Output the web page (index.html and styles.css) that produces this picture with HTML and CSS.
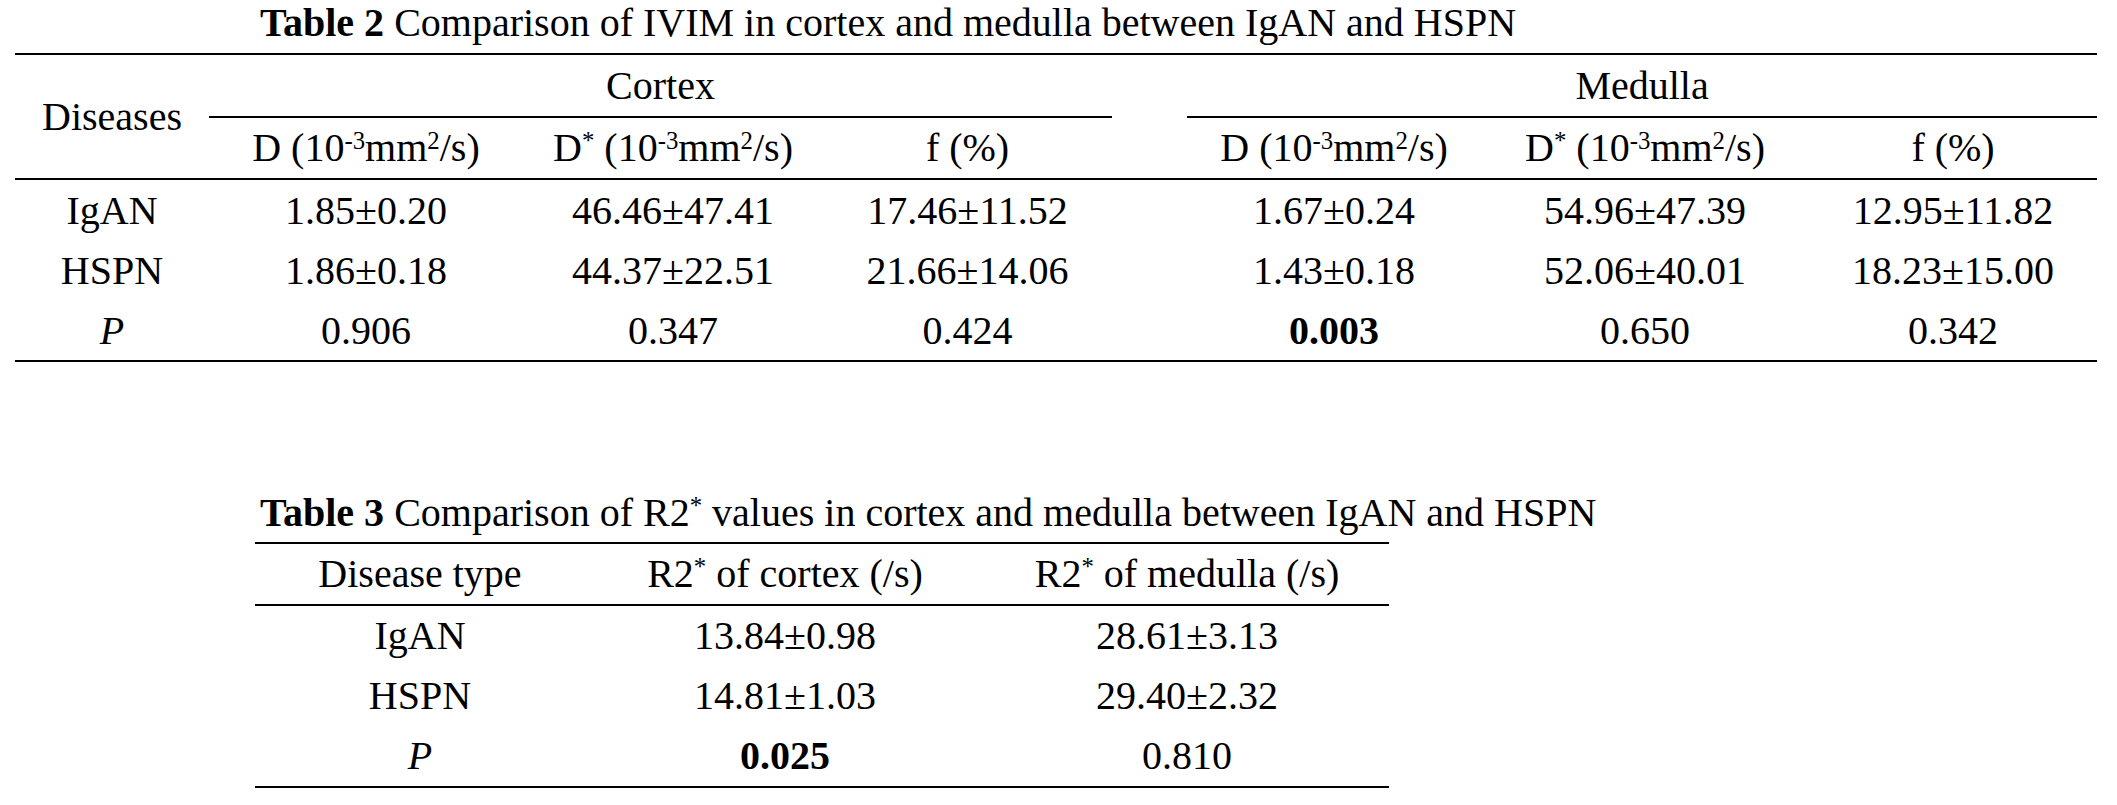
FILE: index.html
```html
<!DOCTYPE html>
<html lang="en">
<head>
<meta charset="utf-8">
<title>Tables</title>
<link rel="stylesheet" href="styles.css">
</head>
<body>
<section class="block block-t2">
  <div class="caption"><b>Table 2</b> Comparison of IVIM in cortex and medulla between IgAN and HSPN</div>
  <table class="tbl t2">
    <colgroup>
      <col class="c-dis"><col class="c-a"><col class="c-b"><col class="c-c">
      <col class="c-gap">
      <col class="c-d"><col class="c-e"><col class="c-f">
    </colgroup>
    <thead>
      <tr class="h1">
        <th rowspan="2" class="dis">Diseases</th>
        <th colspan="3" class="grp">Cortex</th>
        <th rowspan="2" class="gap"></th>
        <th colspan="3" class="grp">Medulla</th>
      </tr>
      <tr class="h2">
        <th>D (10<sup>-3</sup>mm<sup>2</sup>/s)</th>
        <th>D<sup>*</sup> (10<sup>-3</sup>mm<sup>2</sup>/s)</th>
        <th>f (%)</th>
        <th>D (10<sup>-3</sup>mm<sup>2</sup>/s)</th>
        <th>D<sup>*</sup> (10<sup>-3</sup>mm<sup>2</sup>/s)</th>
        <th>f (%)</th>
      </tr>
    </thead>
    <tbody>
      <tr>
        <td>IgAN</td><td>1.85±0.20</td><td>46.46±47.41</td><td>17.46±11.52</td><td></td><td>1.67±0.24</td><td>54.96±47.39</td><td>12.95±11.82</td>
      </tr>
      <tr>
        <td>HSPN</td><td>1.86±0.18</td><td>44.37±22.51</td><td>21.66±14.06</td><td></td><td>1.43±0.18</td><td>52.06±40.01</td><td>18.23±15.00</td>
      </tr>
      <tr class="last">
        <td><i>P</i></td><td>0.906</td><td>0.347</td><td>0.424</td><td></td><td><b>0.003</b></td><td>0.650</td><td>0.342</td>
      </tr>
    </tbody>
  </table>
</section>

<section class="block block-t3">
  <div class="caption"><b>Table 3</b> Comparison of R2<sup>*</sup> values in cortex and medulla between IgAN and HSPN</div>
  <table class="tbl t3">
    <colgroup>
      <col class="c3-a"><col class="c3-b"><col class="c3-c">
    </colgroup>
    <thead>
      <tr class="h">
        <th>Disease type</th>
        <th>R2<sup>*</sup> of cortex (/s)</th>
        <th>R2<sup>*</sup> of medulla (/s)</th>
      </tr>
    </thead>
    <tbody>
      <tr><td>IgAN</td><td>13.84±0.98</td><td>28.61±3.13</td></tr>
      <tr><td>HSPN</td><td>14.81±1.03</td><td>29.40±2.32</td></tr>
      <tr class="last"><td><i>P</i></td><td><b>0.025</b></td><td>0.810</td></tr>
    </tbody>
  </table>
</section>
</body>
</html>
```

FILE: styles.css
```css
html, body {
  margin: 0;
  padding: 0;
  background: #ffffff;
}

body {
  font-family: "Liberation Serif", "Times New Roman", serif;
  font-size: 40px;
  line-height: 46px;
  color: #000000;
}

.block {
  display: flex;
  flex-direction: column;
  align-items: flex-start;
}

.block-t2 {
  padding-left: 15px;
}

.block-t3 {
  margin-top: 128px;
  padding-left: 255px;
}

.caption {
  white-space: nowrap;
  margin-bottom: 7px;
}

.block-t2 .caption {
  padding-left: 245px;
}

.block-t3 .caption {
  padding-left: 5px;
  margin-bottom: 6px;
}

.caption b {
  font-weight: bold;
}

sup {
  font-size: 0.62em;
  line-height: 0;
  vertical-align: 0.5em;
}

.tbl {
  border-collapse: separate;
  border-spacing: 0;
  table-layout: fixed;
}

.tbl th,
.tbl td {
  font-weight: normal;
  text-align: center;
  white-space: nowrap;
  padding: 0;
}

.tbl b {
  font-weight: bold;
}

/* Table 2 */
.t2 {
  width: 2082px;
}

.c-dis { width: 194px; }
.c-a { width: 314px; }
.c-b { width: 300px; }
.c-c { width: 289px; }
.c-gap { width: 75px; }
.c-d { width: 294px; }
.c-e { width: 328px; }
.c-f { width: 288px; }

.t2 .h1 th {
  border-top: 2px solid #000;
  padding: 8px 0 7px;
}

.t2 .h1 .grp {
  border-bottom: 2px solid #000;
}

.t2 .h1 .dis,
.t2 .h1 .gap {
  vertical-align: middle;
  border-bottom: 2px solid #000;
  padding: 0;
}

.t2 .h2 th {
  padding: 7px 0 7px;
  border-bottom: 2px solid #000;
}

.t2 td {
  padding: 8px 0 6px;
}

.t2 .last td {
  border-bottom: 2px solid #000;
}

/* Table 3 */
.t3 {
  width: 1134px;
}

.c3-a { width: 330px; }
.c3-b { width: 400px; }
.c3-c { width: 404px; }

.t3 .h th {
  border-top: 2px solid #000;
  border-bottom: 2px solid #000;
  padding: 7px 0 7px;
}

.t3 td {
  padding: 7px 0 7px;
}

.t3 .last td {
  border-bottom: 2px solid #000;
}
```
